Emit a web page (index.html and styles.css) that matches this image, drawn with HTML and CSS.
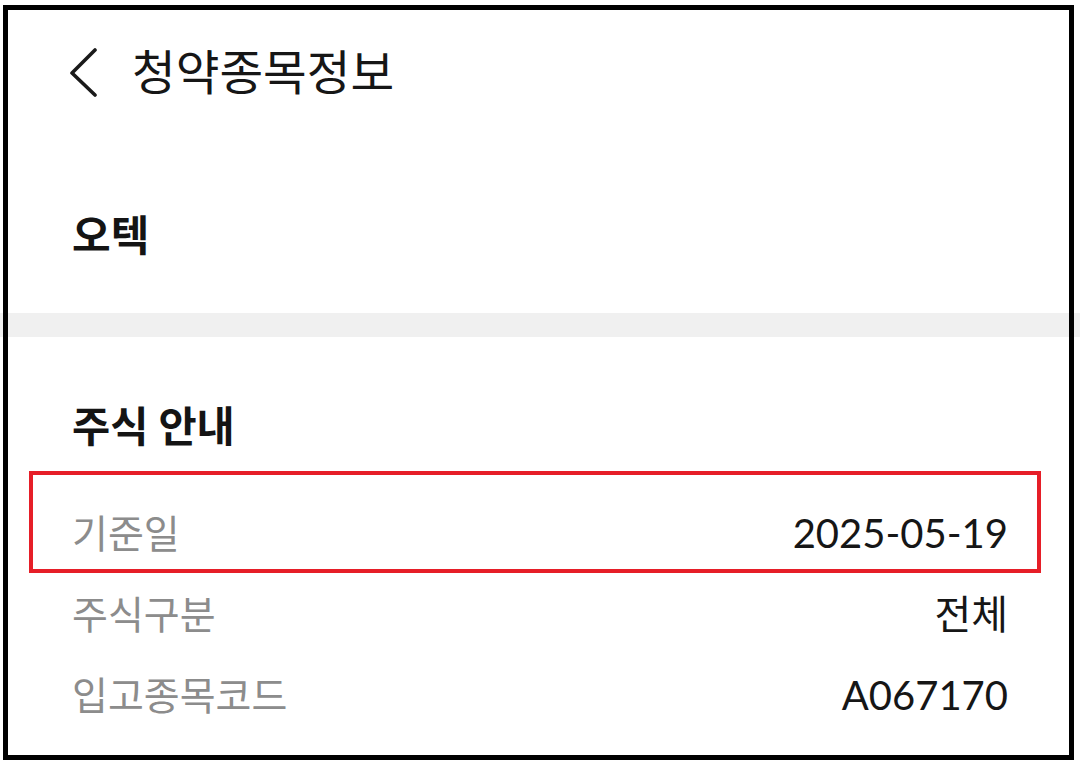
FILE: index.html
```html
<!DOCTYPE html>
<html lang="ko">
<head>
<meta charset="utf-8">
<title>청약종목정보</title>
<link rel="stylesheet" href="styles.css">
</head>
<body>
<div class="page">
  <header class="header">
    <svg class="back" width="34" height="50" viewBox="0 0 34 50">
      <polyline points="28,3 5,26 28,48" fill="none" stroke="#1a1a1a" stroke-width="3.6" stroke-linecap="round" stroke-linejoin="round"/>
    </svg>
    <h1 class="title">청약종목정보</h1>
  </header>
  <section class="name">
    <h2 class="name-text">오텍</h2>
  </section>
  <div class="band"></div>
  <section class="info">
    <h3 class="info-title">주식 안내</h3>
    <div class="rows">
      <div class="row"><span class="label">기준일</span><span class="value">2025-05-19</span></div>
      <div class="row"><span class="label">주식구분</span><span class="value">전체</span></div>
      <div class="row"><span class="label">입고종목코드</span><span class="value">A067170</span></div>
    </div>
  </section>
</div>
<div class="highlight"></div>
<div class="frame"></div>
</body>
</html>
```
FILE: styles.css
```css
* { box-sizing: border-box; }
html, body {
  margin: 0;
  padding: 0;
  background: #fff;
  width: 1080px;
  height: 769px;
  overflow: hidden;
  font-family: Lato, "Noto Sans CJK KR", "Noto Sans", sans-serif;
  color: #151515;
}
.page {
  width: 1080px;
  display: flex;
  flex-direction: column;
}
.header {
  height: 145px;
  display: flex;
  align-items: center;
  padding-left: 67px;
  padding-bottom: 2px;
}
.back {
  display: block;
  margin-right: 31px;
}
.title {
  margin: 0;
  font-size: 47.5px;
  font-weight: 400;
  line-height: 50px;
  color: #161616;
  letter-spacing: 0;
}
.name {
  height: 168px;
  padding: 65px 72px 0;
}
.name-text {
  margin: 0;
  font-size: 42px;
  font-weight: 700;
  line-height: 50px;
  color: #141414;
}
.band {
  height: 24px;
  background: #f0f0f0;
}
.info {
  padding: 64px 72px 0;
}
.info-title {
  margin: 0 0 40px;
  font-size: 41.5px;
  font-weight: 700;
  line-height: 50px;
  color: #141414;
}
.rows {
  display: flex;
  flex-direction: column;
}
.row {
  height: 81px;
  display: flex;
  justify-content: space-between;
  align-items: center;
  padding-top: 2px;
}
.label {
  font-size: 39px;
  color: #8c8c8c;
  line-height: 50px;
}
.value {
  font-size: 40px;
  color: #161616;
  line-height: 50px;
}
.highlight {
  position: absolute;
  left: 29px;
  top: 471px;
  width: 1012px;
  height: 102px;
  border: 4px solid #e61e28;
  pointer-events: none;
}
.frame {
  position: absolute;
  left: 3px;
  top: 5px;
  width: 1071px;
  height: 755px;
  border: 5px solid #000;
  pointer-events: none;
}
```
